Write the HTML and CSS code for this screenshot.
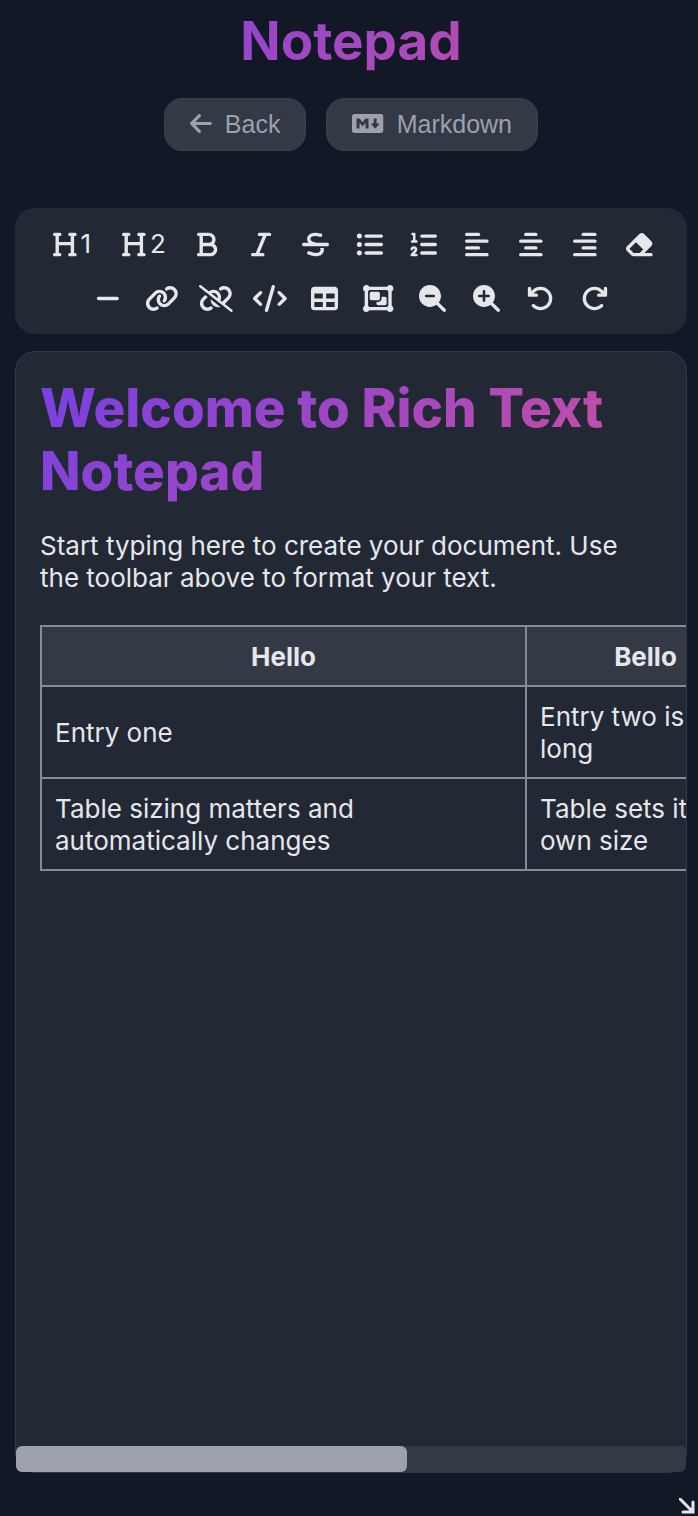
FILE: index.html
```html
<!DOCTYPE html>
<html lang="en">
<head>
<meta charset="utf-8">
<meta name="viewport" content="width=device-width, initial-scale=1">
<title>Notepad</title>
<link rel="stylesheet" href="styles.css">
</head>
<body>
<div class="page">
  <header class="header">
    <h1 class="title">Notepad</h1>
    <nav class="actions">
      <button class="action" type="button">
        <svg class="icon" viewBox="0 0 448 512" aria-hidden="true"><path d="M9.4 233.4c-12.5 12.5-12.5 32.8 0 45.3l160 160c12.5 12.5 32.8 12.5 45.3 0s12.5-32.8 0-45.3L109.2 288 416 288c17.7 0 32-14.3 32-32s-14.3-32-32-32l-306.7 0L214.6 118.6c12.5-12.5 12.5-32.8 0-45.3s-32.8-12.5-45.3 0l-160 160z"/></svg>
        Back
      </button>
      <button class="action" type="button">
        <svg class="icon" viewBox="0 0 640 512" aria-hidden="true"><path d="M593.8 59.1H46.2C20.7 59.1 0 79.8 0 105.2v301.5c0 25.5 20.7 46.2 46.2 46.2h547.7c25.5 0 46.2-20.7 46.1-46.1V105.2c0-25.4-20.7-46.1-46.2-46.1zM338.5 360.6H277v-120l-61.5 76.9-61.5-76.9v120H92.3V151.4h61.5l61.5 76.9 61.5-76.9h61.5v209.2zm135.3 3.1L381.5 256H443V151.4h61.5V256H566z"/></svg>
        Markdown
      </button>
    </nav>
  </header>

  <div class="toolbar" role="toolbar" aria-label="Formatting">
    <button class="tool" type="button" title="Heading 1"><svg class="icon" viewBox="0 0 448 512"><path d="M0 64C0 46.3 14.3 32 32 32H80h48c17.7 0 32 14.3 32 32s-14.3 32-32 32H112V208H336V96H320c-17.7 0-32-14.3-32-32s14.3-32 32-32h48 48c17.7 0 32 14.3 32 32s-14.3 32-32 32H400V240 416h16c17.7 0 32 14.3 32 32s-14.3 32-32 32H368 320c-17.7 0-32-14.3-32-32s14.3-32 32-32h16V272H112V416h16c17.7 0 32 14.3 32 32s-14.3 32-32 32H80 32c-17.7 0-32-14.3-32-32s14.3-32 32-32H48V240 96H32C14.3 96 0 81.7 0 64z"/></svg>1</button>
    <button class="tool" type="button" title="Heading 2"><svg class="icon" viewBox="0 0 448 512"><path d="M0 64C0 46.3 14.3 32 32 32H80h48c17.7 0 32 14.3 32 32s-14.3 32-32 32H112V208H336V96H320c-17.7 0-32-14.3-32-32s14.3-32 32-32h48 48c17.7 0 32 14.3 32 32s-14.3 32-32 32H400V240 416h16c17.7 0 32 14.3 32 32s-14.3 32-32 32H368 320c-17.7 0-32-14.3-32-32s14.3-32 32-32h16V272H112V416h16c17.7 0 32 14.3 32 32s-14.3 32-32 32H80 32c-17.7 0-32-14.3-32-32s14.3-32 32-32H48V240 96H32C14.3 96 0 81.7 0 64z"/></svg>2</button>
    <button class="tool" type="button" title="Bold"><svg class="icon" viewBox="0 0 384 512"><path d="M0 64C0 46.3 14.3 32 32 32H80 96 224c70.7 0 128 57.3 128 128c0 31.3-11.3 60.1-30 82.3c37.1 22.4 62 63.1 62 109.7c0 70.7-57.3 128-128 128H96 80 32c-17.7 0-32-14.3-32-32s14.3-32 32-32H48V256 96H32C14.3 96 0 81.7 0 64zM224 224c35.3 0 64-28.7 64-64s-28.7-64-64-64H112V224H224zM112 288V416H256c35.3 0 64-28.7 64-64s-28.7-64-64-64H224 112z"/></svg></button>
    <button class="tool" type="button" title="Italic"><svg class="icon" viewBox="0 0 384 512"><path d="M128 64c0-17.7 14.3-32 32-32H352c17.7 0 32 14.3 32 32s-14.3 32-32 32H293.3L160 416h64c17.7 0 32 14.3 32 32s-14.3 32-32 32H32c-17.7 0-32-14.3-32-32s14.3-32 32-32H90.7L224 96H160c-17.7 0-32-14.3-32-32z"/></svg></button>
    <button class="tool" type="button" title="Strikethrough"><svg class="icon" viewBox="0 0 512 512"><path d="M161.3 144c3.2-17.2 14-30.1 33.7-38.6c21.1-9 51.8-12.3 88.6-6.5c11.9 1.9 48.8 9.1 60.1 12c17.1 4.5 34.6-5.6 39.2-22.7s-5.6-34.6-22.7-39.2c-14.3-3.8-53.6-11.4-66.6-13.4c-44.7-7-88.3-4.2-123.7 10.9c-36.5 15.6-64.4 44.8-71.8 87.3c-.1 .6-.2 1.1-.2 1.7c-2.8 23.9 .5 45.6 10.1 64.6c4.5 9 10.2 16.9 16.7 23.9H32c-17.7 0-32 14.3-32 32s14.3 32 32 32H480c17.7 0 32-14.3 32-32s-14.3-32-32-32H270.1c-.1 0-.3-.1-.4-.1l-1.1-.3c-36-10.8-65.2-19.6-85.2-33.1c-9.3-6.3-15-12.6-18.2-19.1c-3.1-6.1-5.2-14.6-3.8-27.4zM348.9 337.2c2.7 6.5 4.4 15.8 1.9 30.1c-3 17.6-13.8 30.8-33.9 39.4c-21.1 9-51.7 12.3-88.5 6.5c-18-2.9-49.1-13.5-74.4-22.1c-5.6-1.9-11-3.7-15.9-5.4c-16.8-5.6-34.9 3.5-40.5 20.3s3.5 34.9 20.3 40.5c3.6 1.2 7.9 2.7 12.7 4.3c24.9 8.5 63.6 21.7 87.6 25.6l.2 0c44.7 7 88.3 4.2 123.7-10.9c36.5-15.6 64.4-44.8 71.8-87.3c3.6-21 2.7-40.4-3.1-58.1H335.1c7 5.6 11.4 11.2 13.9 17.2z"/></svg></button>
    <button class="tool" type="button" title="Bulleted list"><svg class="icon" viewBox="0 0 512 512"><path d="M64 144a48 48 0 1 0 0-96 48 48 0 1 0 0 96zM192 64c-17.7 0-32 14.3-32 32s14.3 32 32 32H480c17.7 0 32-14.3 32-32s-14.3-32-32-32H192zm0 160c-17.7 0-32 14.3-32 32s14.3 32 32 32H480c17.7 0 32-14.3 32-32s-14.3-32-32-32H192zm0 160c-17.7 0-32 14.3-32 32s14.3 32 32 32H480c17.7 0 32-14.3 32-32s-14.3-32-32-32H192zM64 464a48 48 0 1 0 0-96 48 48 0 1 0 0 96zm48-208a48 48 0 1 0 -96 0 48 48 0 1 0 96 0z"/></svg></button>
    <button class="tool" type="button" title="Numbered list"><svg class="icon" viewBox="0 0 512 512"><path d="M24 56c0-13.3 10.7-24 24-24H80c13.3 0 24 10.7 24 24V176h16c13.3 0 24 10.7 24 24s-10.7 24-24 24H40c-13.3 0-24-10.7-24-24s10.7-24 24-24H56V80H48C34.7 80 24 69.3 24 56zM86.7 341.2c-6.5-7.4-18.3-6.9-24 1.2L51.5 357.9c-7.7 10.8-22.7 13.3-33.5 5.6s-13.3-22.7-5.6-33.5l11.1-15.6c23.7-33.2 72.3-35.6 99.2-4.9c21.3 24.4 20.8 60.9-1.1 84.7L86.8 432H120c13.3 0 24 10.7 24 24s-10.7 24-24 24H32c-9.5 0-18.2-5.6-22-14.4s-2.1-18.9 4.3-25.9l72-78c5.3-5.8 5.4-14.6 .3-20.5z"/><path class="bars" d="M224 96H480M224 256H480M224 416H480"/></svg></button>
    <button class="tool" type="button" title="Align left"><svg class="icon" viewBox="0 0 448 512"><path class="bars" d="M32 64H256M32 192H416M32 320H256M32 448H416"/></svg></button>
    <button class="tool" type="button" title="Align center"><svg class="icon" viewBox="0 0 448 512"><path class="bars" d="M128 64H320M32 192H416M128 320H320M32 448H416"/></svg></button>
    <button class="tool" type="button" title="Align right"><svg class="icon" viewBox="0 0 448 512"><path class="bars" d="M192 64H416M32 192H416M192 320H416M32 448H416"/></svg></button>
    <button class="tool" type="button" title="Clear formatting"><svg class="icon" viewBox="0 0 576 512"><path d="M290.7 57.4L57.4 290.7c-25 25-25 65.5 0 90.5l80 80c12 12 28.3 18.7 45.3 18.7H288h9.4H512c17.7 0 32-14.3 32-32s-14.3-32-32-32H387.9L518.6 285.3c25-25 25-65.5 0-90.5L381.3 57.4c-25-25-65.5-25-90.5 0zM297.4 416H288l-105.4 0-80-80L227.3 211.3 364.7 348.7 297.4 416z"/></svg></button>
    <button class="tool" type="button" title="Horizontal rule"><svg class="icon" viewBox="0 0 448 512"><path class="bars" d="M48 256H400"/></svg></button>
    <button class="tool" type="button" title="Insert link"><svg class="icon" viewBox="0 0 640 512"><path d="M579.8 267.7c56.5-56.5 56.5-148 0-204.5c-50-50-128.8-56.5-186.3-15.4l-1.6 1.1c-14.4 10.3-17.7 30.3-7.4 44.6s30.3 17.7 44.6 7.4l1.6-1.1c32.1-22.9 76-19.3 103.8 8.6c31.5 31.5 31.5 82.5 0 114L422.3 334.8c-31.5 31.5-82.5 31.5-114 0c-27.9-27.9-31.5-71.8-8.6-103.8l1.1-1.6c10.3-14.4 6.9-34.4-7.4-44.6s-34.4-6.9-44.6 7.4l-1.1 1.6C206.5 251.2 213 330 263 380c56.5 56.5 148 56.5 204.5 0L579.8 267.7zM60.2 244.3c-56.5 56.5-56.5 148 0 204.5c50 50 128.8 56.5 186.3 15.4l1.6-1.1c14.4-10.3 17.7-30.3 7.4-44.6s-30.3-17.7-44.6-7.4l-1.6 1.1c-32.1 22.9-76 19.3-103.8-8.6C74 372 74 321 105.5 289.5L217.7 177.2c31.5-31.5 82.5-31.5 114 0c27.9 27.9 31.5 71.8 8.6 103.9l-1.1 1.6c-10.3 14.4-6.9 34.4 7.4 44.6s34.4 6.9 44.6-7.4l1.1-1.6C433.5 260.8 427 182 377 132c-56.5-56.5-148-56.5-204.5 0L60.2 244.3z"/></svg></button>
    <button class="tool" type="button" title="Remove link"><svg class="icon" viewBox="0 0 640 512"><path d="M38.8 5.1C28.4-3.1 13.3-1.2 5.1 9.2S-1.2 34.7 9.2 42.9l592 464c10.4 8.2 25.5 6.3 33.7-4.1s6.3-25.5-4.1-33.7L489.3 358.2l90.5-90.5c56.5-56.5 56.5-148 0-204.5c-50-50-128.8-56.5-186.3-15.4l-1.6 1.1c-14.4 10.3-17.7 30.3-7.4 44.6s30.3 17.7 44.6 7.4l1.6-1.1c32.1-22.9 76-19.3 103.8 8.6c31.5 31.5 31.5 82.5 0 114l-96 96-31.9-25C430.9 239.6 420.1 175.1 377 132c-52.2-52.3-134.5-56.2-191.3-11.7L38.8 5.1zM239 162c30.1-14.9 67.7-9.9 92.8 15.3c20 20 27.5 48.3 21.7 74.5L239 162zM406.6 416.4L220.9 270c-2.1 39.8 12.2 80.1 42.2 110c38.9 38.9 94.4 51 143.6 36.3zm-290-228.5L60.2 244.3c-56.5 56.5-56.5 148 0 204.5c50 50 128.8 56.5 186.3 15.4l1.6-1.1c14.4-10.3 17.7-30.3 7.4-44.6s-30.3-17.7-44.6-7.4l-1.6 1.1c-32.1 22.9-76 19.3-103.8-8.6C74 372 74 321 105.5 289.5l61.8-61.8-50.6-39.9z"/></svg></button>
    <button class="tool" type="button" title="Code"><svg class="icon" viewBox="0 0 640 512"><path d="M392.8 1.2c-17-4.9-34.7 5-39.6 22l-128 448c-4.9 17 5 34.7 22 39.6s34.7-5 39.6-22l128-448c4.9-17-5-34.7-22-39.6zm80.6 120.1c-12.5 12.5-12.5 32.8 0 45.3L562.7 256l-89.4 89.4c-12.5 12.5-12.5 32.8 0 45.3s32.8 12.5 45.3 0l112-112c12.5-12.5 12.5-32.8 0-45.3l-112-112c-12.5-12.5-32.8-12.5-45.3 0zm-306.7 0c-12.5-12.5-32.8-12.5-45.3 0l-112 112c-12.5 12.5-12.5 32.8 0 45.3l112 112c12.5 12.5 32.8 12.5 45.3 0s12.5-32.8 0-45.3L77.3 256l89.4-89.4c12.5-12.5 12.5-32.8 0-45.3z"/></svg></button>
    <button class="tool" type="button" title="Insert table"><svg class="icon" viewBox="0 0 512 512"><path fill-rule="evenodd" d="M64 256V160H224v96H64zm0 64H224v96H64V320zm224 96V320H448v96H288zM448 256H288V160H448v96zM64 32C28.7 32 0 60.7 0 96V416c0 35.3 28.7 64 64 64H448c35.3 0 64-28.7 64-64V96c0-35.3-28.7-64-64-64H64z"/></svg></button>
    <button class="tool" type="button" title="Group"><svg class="icon" viewBox="0 0 576 512"><path fill-rule="evenodd" d="M32 119.4C12.9 108.4 0 87.7 0 64C0 28.7 28.7 0 64 0c23.7 0 44.4 12.9 55.4 32H456.6C467.6 12.9 488.3 0 512 0c35.3 0 64 28.7 64 64c0 23.7-12.9 44.4-32 55.4V392.6c19.1 11.1 32 31.7 32 55.4c0 35.3-28.7 64-64 64c-23.7 0-44.4-12.9-55.4-32H119.4c-11.1 19.1-31.7 32-55.4 32c-35.3 0-64-28.7-64-64c0-23.7 12.9-44.4 32-55.4V119.4zM119.4 96c-5.6 9.7-13.7 17.8-23.4 23.4V392.6c9.7 5.6 17.8 13.7 23.4 23.4H456.6c5.6-9.7 13.7-17.8 23.4-23.4V119.4c-9.7-5.6-17.8-13.7-23.4-23.4H119.4zM128 160c0-17.7 14.3-32 32-32H288c17.7 0 32 14.3 32 32v96c0 17.7-14.3 32-32 32H160c-17.7 0-32-14.3-32-32V160zM256 320h32c35.3 0 64-28.7 64-64V224h64c17.7 0 32 14.3 32 32v96c0 17.7-14.3 32-32 32H288c-17.7 0-32-14.3-32-32V320z"/></svg></button>
    <button class="tool" type="button" title="Zoom out"><svg class="icon" viewBox="0 0 512 512"><path fill-rule="evenodd" d="M416 208c0 45.9-14.9 88.3-40 122.7L502.6 457.4c12.5 12.5 12.5 32.8 0 45.3s-32.8 12.5-45.3 0L330.7 376c-34.4 25.2-76.8 40-122.7 40C93.1 416 0 322.9 0 208S93.1 0 208 0S416 93.1 416 208zM136 184c-13.3 0-24 10.7-24 24s10.7 24 24 24H280c13.3 0 24-10.7 24-24s-10.7-24-24-24H136z"/></svg></button>
    <button class="tool" type="button" title="Zoom in"><svg class="icon" viewBox="0 0 512 512"><path fill-rule="evenodd" d="M416 208c0 45.9-14.9 88.3-40 122.7L502.6 457.4c12.5 12.5 12.5 32.8 0 45.3s-32.8 12.5-45.3 0L330.7 376c-34.4 25.2-76.8 40-122.7 40C93.1 416 0 322.9 0 208S93.1 0 208 0S416 93.1 416 208zM184 296c0 13.3 10.7 24 24 24s24-10.7 24-24V232h64c13.3 0 24-10.7 24-24s-10.7-24-24-24H232V120c0-13.3-10.7-24-24-24s-24 10.7-24 24v64H120c-13.3 0-24 10.7-24 24s10.7 24 24 24h64v64z"/></svg></button>
    <button class="tool" type="button" title="Undo"><svg class="icon" viewBox="0 0 512 512"><path d="M125.7 160H176c17.7 0 32 14.3 32 32s-14.3 32-32 32H48c-17.7 0-32-14.3-32-32V64c0-17.7 14.3-32 32-32s32 14.3 32 32v51.2L97.6 97.6c87.5-87.5 229.3-87.5 316.8 0s87.5 229.3 0 316.8s-229.3 87.5-316.8 0c-12.5-12.5-12.5-32.8 0-45.3s32.8-12.5 45.3 0c62.5 62.5 163.8 62.5 226.3 0s62.5-163.8 0-226.3s-163.8-62.5-226.3 0L125.7 160z"/></svg></button>
    <button class="tool" type="button" title="Redo"><svg class="icon" viewBox="0 0 512 512"><path transform="matrix(-1 0 0 1 512 0)" d="M125.7 160H176c17.7 0 32 14.3 32 32s-14.3 32-32 32H48c-17.7 0-32-14.3-32-32V64c0-17.7 14.3-32 32-32s32 14.3 32 32v51.2L97.6 97.6c87.5-87.5 229.3-87.5 316.8 0s87.5 229.3 0 316.8s-229.3 87.5-316.8 0c-12.5-12.5-12.5-32.8 0-45.3s32.8-12.5 45.3 0c62.5 62.5 163.8 62.5 226.3 0s62.5-163.8 0-226.3s-163.8-62.5-226.3 0L125.7 160z"/></svg></button>
  </div>

  <main class="editor">
    <div class="document" contenteditable="true" spellcheck="false">
      <h1 class="doc-title">Welcome to Rich Text Notepad</h1>
      <p class="doc-text">Start typing here to create your document. Use the toolbar above to format your text.</p>
      <table class="doc-table">
        <thead>
          <tr><th class="col-wide">Hello</th><th class="col-narrow">Bello</th></tr>
        </thead>
        <tbody>
          <tr><td>Entry one</td><td>Entry two is<br>long</td></tr>
          <tr><td>Table sizing matters and<br>automatically changes</td><td>Table sets its<br>own size</td></tr>
        </tbody>
      </table>
    </div>
    <div class="scroll-track"><div class="scroll-thumb"></div></div>
  </main>

  <svg class="resize" viewBox="0 0 16 16" aria-hidden="true"><path d="M1 1L14 14M14 4V14H4"/></svg>
</div>
</body>
</html>
```
FILE: styles.css
```css
* {
  box-sizing: border-box;
}

body {
  margin: 0;
  background: #121825;
  color: #e5e7eb;
  font: 26px/32px Inter, sans-serif;
}

.page {
  position: relative;
  display: flex;
  flex-direction: column;
  min-height: 100vh;
  padding: 10px 11px 43px 15px;
}

.title,
.doc-title {
  margin: 0;
  font-size: 53px;
  line-height: 63px;
  background: linear-gradient(135deg, #7740e2, #d0509e);
  -webkit-background-clip: text;
  background-clip: text;
  color: transparent;
}

.title {
  font-weight: 700;
  text-align: center;
}

.actions {
  display: flex;
  justify-content: center;
  gap: 20px;
  margin: 25px 0 57px;
}

.action {
  display: flex;
  align-items: center;
  gap: 13px;
  height: 53px;
  padding: 0 25px 2px;
  border: 1px solid #3a404c;
  border-radius: 18px;
  background: #333945;
  color: #9ca1ad;
  font: 25px/28px "Liberation Sans", Arial, sans-serif;
}

.icon {
  display: block;
  height: 25px;
  fill: currentColor;
  overflow: visible;
}

.tool .icon {
  height: 27px;
}

.bars {
  fill: none;
  stroke: currentColor;
  stroke-width: 64;
  stroke-linecap: round;
}

.toolbar {
  display: flex;
  flex-wrap: wrap;
  justify-content: center;
  padding: 9px 14px;
  border-radius: 20px;
  background: #222834;
}

.tool {
  display: flex;
  align-items: center;
  justify-content: center;
  gap: 4px;
  min-width: 54px;
  height: 54px;
  padding: 0 10px;
  border: 0;
  background: none;
  color: #e5e7eb;
  font: 26px/32px Inter, sans-serif;
}

.tool:nth-child(-n+2) {
  width: 72px;
}

.editor {
  display: flex;
  flex: 1;
  flex-direction: column;
  margin-top: 17px;
  border: 1px solid #333945;
  border-radius: 20px;
  background: #222834;
}

.document {
  flex: 1;
  padding: 25px 24px;
  overflow-x: auto;
  scrollbar-width: none;
  outline: 0;
}

.doc-title {
  font-weight: 800;
}

.doc-text {
  margin: 27px 0 31px;
}

.doc-table {
  width: 726px;
  table-layout: fixed;
  border-collapse: collapse;
}

.col-wide {
  width: 485px;
}

.doc-table th,
.doc-table td {
  padding: 14px 13px 12px;
  border: 2px solid #858b97;
  text-align: left;
}

.doc-table th {
  background: #333945;
  font-weight: 700;
  text-align: center;
}

.scroll-track {
  height: 26px;
  border-radius: 6px;
  background: #333945;
}

.scroll-thumb {
  width: 58.4%;
  height: 100%;
  border-radius: 6px;
  background: #9ca1ad;
}

.resize {
  position: absolute;
  right: 3px;
  bottom: 2px;
  width: 16px;
  height: 16px;
  fill: none;
  stroke: #e5e7eb;
  stroke-width: 3;
  stroke-linecap: round;
}
```
